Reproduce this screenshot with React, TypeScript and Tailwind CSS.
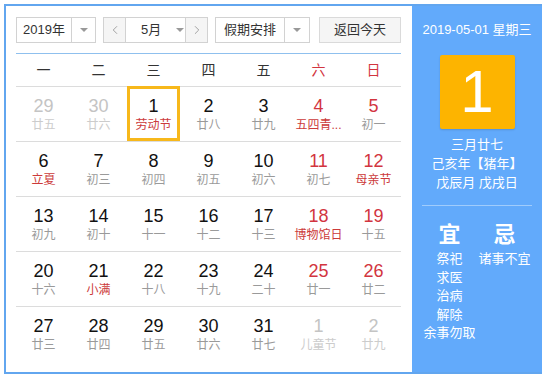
import { ChevronLeft, ChevronRight } from "lucide-react";

type Day = {
  n: number;
  sub: string;
  other?: boolean;
  redNum?: boolean;
  redSub?: boolean;
  selected?: boolean;
};

const weeks: Day[][] = [
  [
    { n: 29, sub: "廿五", other: true },
    { n: 30, sub: "廿六", other: true },
    { n: 1, sub: "劳动节", redSub: true, selected: true },
    { n: 2, sub: "廿八" },
    { n: 3, sub: "廿九" },
    { n: 4, sub: "五四青...", redNum: true, redSub: true },
    { n: 5, sub: "初一", redNum: true },
  ],
  [
    { n: 6, sub: "立夏", redSub: true },
    { n: 7, sub: "初三" },
    { n: 8, sub: "初四" },
    { n: 9, sub: "初五" },
    { n: 10, sub: "初六" },
    { n: 11, sub: "初七", redNum: true },
    { n: 12, sub: "母亲节", redNum: true, redSub: true },
  ],
  [
    { n: 13, sub: "初九" },
    { n: 14, sub: "初十" },
    { n: 15, sub: "十一" },
    { n: 16, sub: "十二" },
    { n: 17, sub: "十三" },
    { n: 18, sub: "博物馆日", redNum: true, redSub: true },
    { n: 19, sub: "十五", redNum: true },
  ],
  [
    { n: 20, sub: "十六" },
    { n: 21, sub: "小满", redSub: true },
    { n: 22, sub: "十八" },
    { n: 23, sub: "十九" },
    { n: 24, sub: "二十" },
    { n: 25, sub: "廿一", redNum: true },
    { n: 26, sub: "廿二", redNum: true },
  ],
  [
    { n: 27, sub: "廿三" },
    { n: 28, sub: "廿四" },
    { n: 29, sub: "廿五" },
    { n: 30, sub: "廿六" },
    { n: 31, sub: "廿七" },
    { n: 1, sub: "儿童节", other: true },
    { n: 2, sub: "廿九", other: true },
  ],
];

const weekdays = ["一", "二", "三", "四", "五", "六", "日"];

const Caret = () => (
  <span className="h-0 w-0 border-x-[4px] border-t-[4px] border-x-transparent border-t-[#999]" />
);

const DayCell = ({ d }: { d: Day }) => {
  const numColor = d.other ? "text-[#c4c4c4]" : d.redNum ? "text-[#d2353f]" : "text-[#111]";
  const subColor = d.other ? "text-[#cccccc]" : d.redSub ? "text-[#cc3a3a]" : "text-[#9a9a9a]";
  return (
    <div className="relative flex h-[54px] flex-col items-center justify-center">
      {d.selected && (
        <div className="absolute top-[-1px] bottom-0 left-[1px] right-[1px] border-[3px] border-[#f7b81b]" />
      )}
      <span className={`text-[18px] leading-[20px] font-['Liberation_Sans',sans-serif] ${numColor}`}>{d.n}</span>
      <span className={`mt-[1px] text-[12px] leading-[16px] ${subColor}`}>{d.sub}</span>
    </div>
  );
};

export default function App() {
  return (
    <div className="font-['Liberation_Sans','Noto_Sans_CJK_SC',sans-serif]">
      <div className="ml-[4px] mt-[4px] flex h-[370px] w-[538px] border-2 border-r-0 border-[#62a6ef]">
        {/* left: calendar */}
        <div className="w-[406px] pl-[10px] pr-[5px] pt-[11px]">
          <div className="flex h-[26px] items-stretch text-[13px] text-[#333]">
            <div className="flex w-[80px] border border-[#d2d2d2]">
              <span className="flex flex-1 items-center justify-center">2019年</span>
              <span className="flex w-[24px] items-center justify-center border-l border-[#d2d2d2]">
                <Caret />
              </span>
            </div>
            <div className="ml-[7px] flex w-[105px] border border-[#d2d2d2]">
              <span className="flex w-[22px] items-center justify-center bg-[#f5f5f5] border-r border-[#d2d2d2] text-[#888]">
                <ChevronLeft size={14} strokeWidth={1.3} />
              </span>
              <span className="flex flex-1 items-center pl-[15px]">
                5月
                <span className="ml-[15px] flex">
                  <Caret />
                </span>
              </span>
              <span className="flex w-[22px] items-center justify-center bg-[#f5f5f5] border-l border-[#d2d2d2] text-[#888]">
                <ChevronRight size={14} strokeWidth={1.3} />
              </span>
            </div>
            <div className="ml-[7px] flex w-[95px] border border-[#d2d2d2]">
              <span className="flex flex-1 items-center justify-center">假期安排</span>
              <span className="flex w-[25px] items-center justify-center border-l border-[#d2d2d2]">
                <Caret />
              </span>
            </div>
            <div className="ml-[9px] flex w-[82px] items-center justify-center border border-[#dadada] bg-[#f5f5f5]">
              返回今天
            </div>
          </div>

          <div className="mt-[10px] h-px w-[385px] bg-[#8fc0ee]" />

          <div className="grid h-[33px] w-[385px] grid-cols-7 border-b border-[#dcdcdc] text-[14px]">
            {weekdays.map((w, i) => (
              <div
                key={w}
                className={`flex items-center justify-center ${i >= 5 ? "text-[#d2353f]" : "text-[#333]"}`}
              >
                {w}
              </div>
            ))}
          </div>

          <div className="w-[385px]">
            {weeks.map((wk, i) => (
              <div
                key={i}
                className={`grid grid-cols-7 ${i < weeks.length - 1 ? "border-b border-[#dcdcdc]" : ""}`}
              >
                {wk.map((d, j) => (
                  <DayCell key={j} d={d} />
                ))}
              </div>
            ))}
          </div>
        </div>

        {/* right: detail panel */}
        <div className="flex w-[130px] flex-col items-center bg-[#62aafb] px-[10px] pt-[15px] text-white">
          <div className="text-[13px] leading-[18px]">2019-05-01 星期三</div>
          <div className="mt-[16px] flex h-[74px] w-[75px] items-center justify-center rounded-[2px] bg-[#fdb400] shadow-[0_1px_2px_rgba(0,0,0,0.15)]">
            <span className="text-[60px] leading-none font-['Liberation_Sans',sans-serif]">1</span>
          </div>
          <div className="mt-[6px] text-center text-[13px] leading-[19px]">
            <div>三月廿七</div>
            <div>己亥年【猪年】</div>
            <div>戊辰月 戊戌日</div>
          </div>
          <div className="mt-[13px] h-px w-full bg-white/40" />
          <div className="mt-[16px] grid w-full grid-cols-2">
            <div className="flex flex-col items-center">
              <span className="text-[22px] leading-[26px] font-bold">宜</span>
              <div className="mt-[2px] flex flex-col items-center text-[13px] leading-[18.5px]">
                <span>祭祀</span>
                <span>求医</span>
                <span>治病</span>
                <span>解除</span>
                <span>余事勿取</span>
              </div>
            </div>
            <div className="flex flex-col items-center">
              <span className="text-[22px] leading-[26px] font-bold">忌</span>
              <div className="mt-[2px] flex flex-col items-center text-[13px] leading-[18.5px]">
                <span>诸事不宜</span>
              </div>
            </div>
          </div>
        </div>
      </div>
    </div>
  );
}
